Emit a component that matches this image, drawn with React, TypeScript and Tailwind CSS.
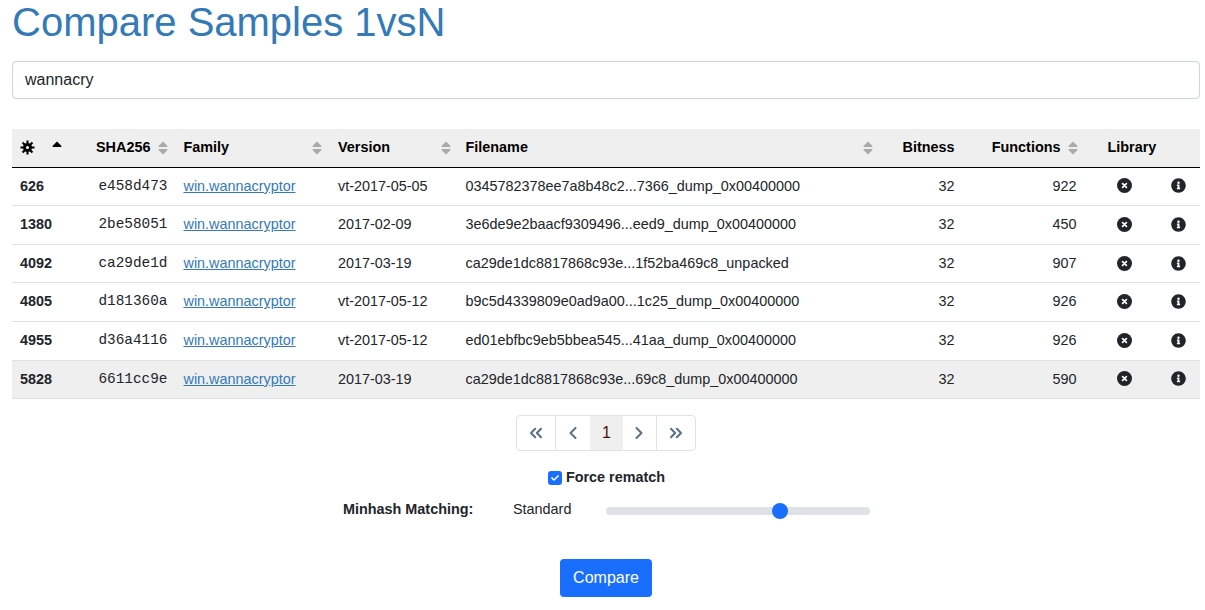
import { FaInfoCircle, FaSort, FaSortUp, FaCheck } from 'react-icons/fa'
import { LuChevronLeft, LuChevronRight, LuChevronsLeft, LuChevronsRight } from 'react-icons/lu'

const rows = [
  { id: '626', sha: 'e458d473', version: 'vt-2017-05-05', file: '0345782378ee7a8b48c2...7366_dump_0x00400000', fns: '922' },
  { id: '1380', sha: '2be58051', version: '2017-02-09', file: '3e6de9e2baacf9309496...eed9_dump_0x00400000', fns: '450' },
  { id: '4092', sha: 'ca29de1d', version: '2017-03-19', file: 'ca29de1dc8817868c93e...1f52ba469c8_unpacked', fns: '907' },
  { id: '4805', sha: 'd181360a', version: 'vt-2017-05-12', file: 'b9c5d4339809e0ad9a00...1c25_dump_0x00400000', fns: '926' },
  { id: '4955', sha: 'd36a4116', version: 'vt-2017-05-12', file: 'ed01ebfbc9eb5bbea545...41aa_dump_0x00400000', fns: '926' },
  { id: '5828', sha: '6611cc9e', version: '2017-03-19', file: 'ca29de1dc8817868c93e...69c8_dump_0x00400000', fns: '590' },
]

function SortIcon() {
  return <FaSort className="text-[16px] text-[#aaaaaa]" />
}

function CloseCircle() {
  return (
    <svg viewBox="0 0 15 15" className="mx-auto -mt-px h-[15px] w-[15px]">
      <circle cx="7.5" cy="7.5" r="7.5" fill="#212529" />
      <path d="M5.6 5.6l3.8 3.8M9.4 5.6l-3.8 3.8" stroke="#ffffff" strokeWidth="1.7" strokeLinecap="round" />
    </svg>
  )
}

// eight point burst in the first header cell
function BurstIcon() {
  return (
    <svg viewBox="0 0 16 16" className="mt-[1px] h-[15px] w-[15px]">
      <path
        d="M8 .5v15M.5 8h15M2.7 2.7l10.6 10.6M13.3 2.7L2.7 13.3"
        stroke="#000000"
        strokeWidth="2.2"
      />
      <circle cx="8" cy="8" r="4.8" fill="#000000" />
      <circle cx="8" cy="8" r="1.6" fill="#ffffff" />
    </svg>
  )
}

export default function App() {
  return (
    <div className="h-[610px] overflow-hidden bg-white pl-3 pr-[5px] font-['Liberation_Sans',sans-serif] text-[#212529]">
      <h1 className="mb-[17px] h-11 text-[40px] leading-[44px] text-[#337ab7]">Compare Samples 1vsN</h1>
      <input
        readOnly
        value="wannacry"
        className="block h-[38px] w-full rounded-[4px] border border-[#ced4da] px-3 text-base text-[#212529] outline-none"
      />

      <table className="mt-[30px] w-full table-fixed border-collapse text-[14.4px] leading-[21.6px]">
        <colgroup>
          <col className="w-[76px]" />
          <col className="w-[87.5px]" />
          <col className="w-[154.5px]" />
          <col className="w-[127.5px]" />
          <col className="w-[424px]" />
          <col className="w-[81px]" />
          <col className="w-[124px]" />
          <col className="w-[76px]" />
          <col />
        </colgroup>
        <thead>
          <tr className="border-b border-black bg-[#efefef] text-left font-bold text-black">
            <th className="py-2 pl-2">
              <div className="flex items-start justify-between pr-[23px]">
                <BurstIcon />
                <FaSortUp className="mt-[1px] text-[16px] text-black" />
              </div>
            </th>
            <th className="py-2 pl-2">
              <div className="flex items-center justify-between pr-[5px]">
                <span>SHA256</span>
                <SortIcon />
              </div>
            </th>
            <th className="py-2 pl-2">
              <div className="flex items-center justify-between pr-[5px]">
                <span>Family</span>
                <SortIcon />
              </div>
            </th>
            <th className="py-2 pl-2">
              <div className="flex items-center justify-between pr-[4px]">
                <span>Version</span>
                <SortIcon />
              </div>
            </th>
            <th className="py-2 pl-2">
              <div className="flex items-center justify-between pr-[6px]">
                <span>Filename</span>
                <SortIcon />
              </div>
            </th>
            <th className="py-2 pr-2 text-right">Bitness</th>
            <th className="py-2 pr-[6px]">
              <div className="flex items-center justify-end gap-1">
                <span>Functions</span>
                <SortIcon />
              </div>
            </th>
            <th className="py-2 pl-[21px]">Library</th>
            <th className="py-2" />
          </tr>
        </thead>
        <tbody>
          {rows.map((row, i) => (
            <tr key={row.id} className={`border-b border-[#dee2e6] ${i === 5 ? 'bg-[#efefef]' : ''}`}>
              <td className="py-2 pl-2 font-bold">{row.id}</td>
              <td className="py-2 pr-2 text-right font-['Liberation_Mono',monospace]">{row.sha}</td>
              <td className="py-2 pl-2">
                <a href="#" className="text-[#337ab7] underline">win.wannacryptor</a>
              </td>
              <td className="py-2 pl-2">{row.version}</td>
              <td className="py-2 pl-2">{row.file}</td>
              <td className="py-2 pr-2 text-right">32</td>
              <td className="py-2 pr-[10px] text-right">{row.fns}</td>
              <td className="py-2">
                <CloseCircle />
              </td>
              <td className="py-2 pr-[6px]">
                <FaInfoCircle className="mx-auto -mt-px text-[15px] text-[#212529]" />
              </td>
            </tr>
          ))}
        </tbody>
      </table>

      <div className="mt-4 flex justify-center">
        <div className="flex h-9 overflow-hidden rounded-[4px] border border-[#dee2e6] text-[#5f7186]">
          <span className="flex w-[39px] items-center justify-center border-r border-[#dee2e6] pr-px"><LuChevronsLeft strokeWidth={2.5} className="text-[20px]" /></span>
          <span className="flex w-[34px] items-center justify-center pr-px"><LuChevronLeft strokeWidth={2.5} className="text-[20px]" /></span>
          <span className="flex w-[33px] items-center justify-center bg-[#efefef] text-base text-[#4a1200]">1</span>
          <span className="flex w-[34px] items-center justify-center border-r border-[#dee2e6] pr-px"><LuChevronRight strokeWidth={2.5} className="text-[20px]" /></span>
          <span className="flex w-[38px] items-center justify-center"><LuChevronsRight strokeWidth={2.5} className="text-[20px]" /></span>
        </div>
      </div>

      <div className="mt-4 flex items-center justify-center gap-1 pl-px text-[14.4px] font-bold leading-[21.6px]">
        <span className="flex h-[14px] w-[14px] items-center justify-center rounded-[3px] bg-[#1a6efd]">
          <FaCheck className="text-[8px] text-white" />
        </span>
        <span>Force rematch</span>
      </div>

      <div className="mt-[10px] flex items-center pl-[331px] text-[14.4px] leading-[21.6px]">
        <span className="w-[170px] font-bold">Minhash Matching:</span>
        <span className="w-[93px]">Standard</span>
        <div className="relative mt-[2px] h-2 w-[264px] rounded-full bg-[#dee2e6]">
          <div className="absolute left-[166px] top-[-4px] h-4 w-4 rounded-full bg-[#1a6efd]" />
        </div>
      </div>

      <div className="mt-[39px] flex justify-center">
        <button className="h-[38px] w-[92px] rounded-[4px] bg-[#1a6efd] text-base text-white">Compare</button>
      </div>
    </div>
  )
}
